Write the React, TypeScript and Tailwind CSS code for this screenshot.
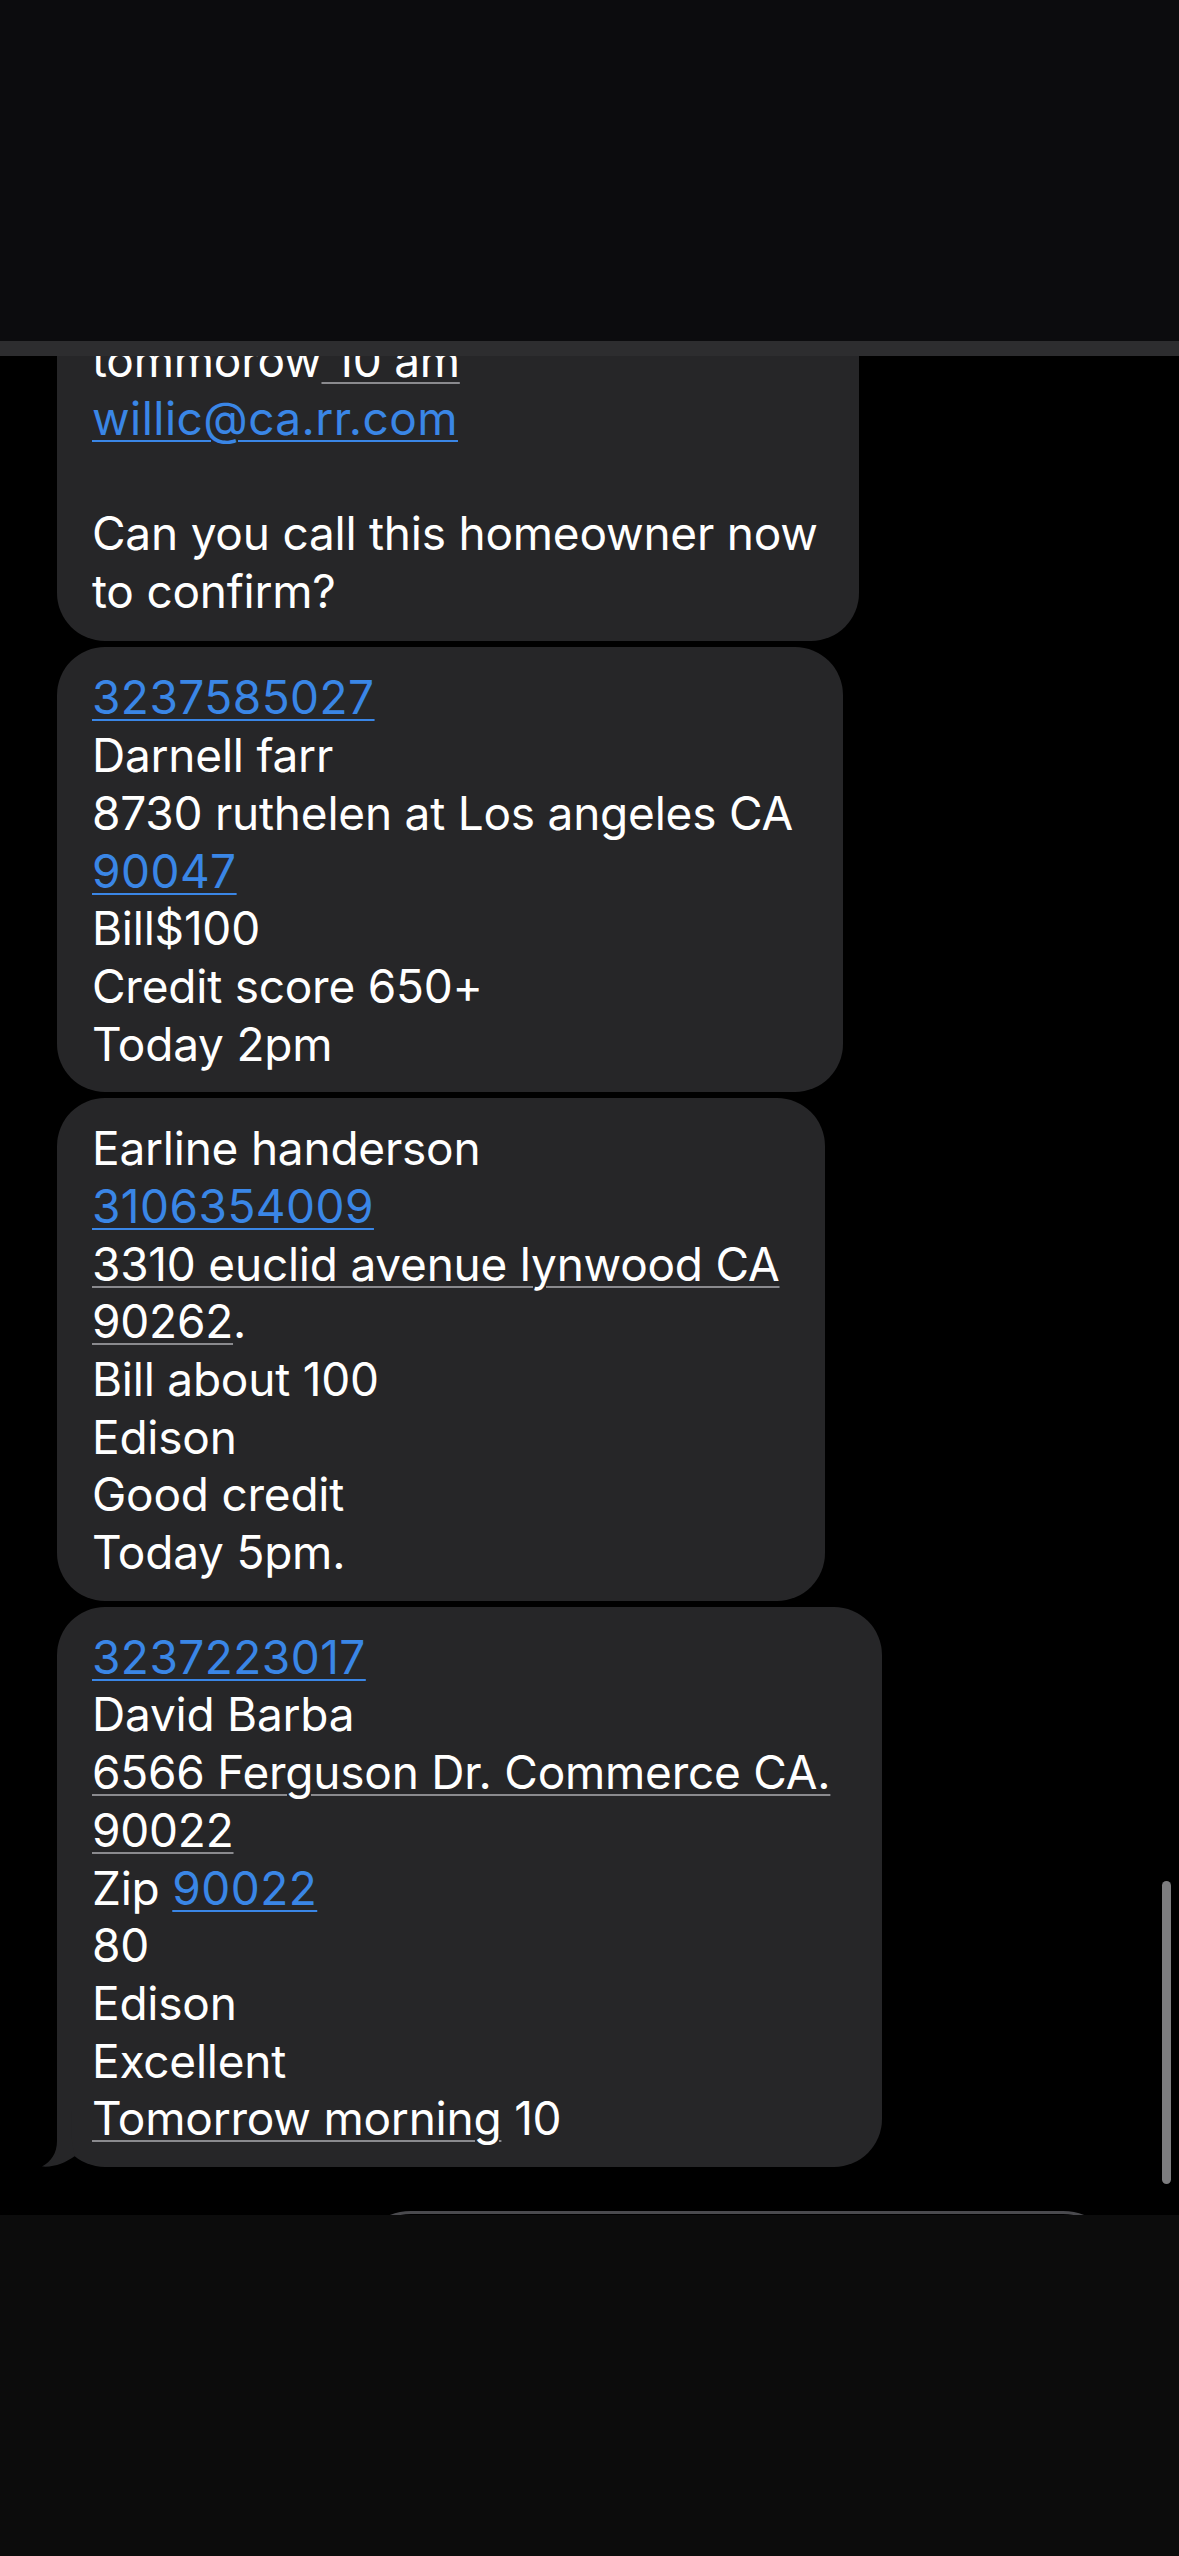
import type { ReactNode } from 'react';

const blue = 'text-[#3a86e6] underline decoration-[#3a86e6] decoration-2 underline-offset-[5px] tracking-[0.01em]';
const gray = 'underline decoration-[#8a8a8e] decoration-2 underline-offset-[5px]';

function Bubble({
  children,
  width,
  className = '',
  tail = false,
}: {
  children: ReactNode;
  width: string;
  className?: string;
  tail?: boolean;
}) {
  return (
    <div className={`relative rounded-[48px] bg-[#262628] pl-[35px] pr-[20px] pt-[22px] ${width} ${className}`}>
      {children}
      {tail && (
        <svg className="absolute -left-[15px] bottom-0" width="40" height="56" viewBox="0 0 40 56">
          <path d="M15,0 L15,30 C15,42 9,51 0,55.5 C12,56.5 23,52 33,45 C30,35 28,15 30,0 Z" fill="#262628" />
        </svg>
      )}
    </div>
  );
}

function Line({ children }: { children?: ReactNode }) {
  return <div className="h-[57.7px] whitespace-nowrap">{children}</div>;
}

export default function App() {
  return (
    <div
      className="flex h-[2556px] w-[1179px] flex-col overflow-hidden bg-black text-[46px] leading-[57.7px] tracking-[-0.005em] text-white"
      style={{ fontFamily: 'Inter, "Noto Sans", sans-serif' }}
    >
      {/* status / header area */}
      <div className="h-[341px] shrink-0 bg-[#0c0c0e]" />
      <div className="h-[15px] shrink-0 bg-[#2d2d2f]" />

      {/* conversation */}
      <div className="relative flex-1 overflow-hidden">
        <div className="flex flex-col gap-[6px] pl-[57px]">
          <Bubble width="w-[802px]" className="-mt-[46px] rounded-t-none pb-[21px]">
            <Line>
              tommorow<span className={gray}> 10 am</span>
            </Line>
            <Line>
              <span className={blue}>willic@ca.rr.com</span>
            </Line>
            <Line />
            <Line>Can you call this homeowner now</Line>
            <Line>to confirm?</Line>
          </Bubble>

          <Bubble width="w-[786px]" className="pb-[19px]">
            <Line>
              <span className={blue}>3237585027</span>
            </Line>
            <Line>Darnell farr</Line>
            <Line>8730 ruthelen at Los angeles CA</Line>
            <Line>
              <span className={blue}>90047</span>
            </Line>
            <Line>Bill$100</Line>
            <Line>Credit score 650+</Line>
            <Line>Today 2pm</Line>
          </Bubble>

          <Bubble width="w-[768px]" className="pb-[19px]">
            <Line>Earline handerson</Line>
            <Line>
              <span className={blue}>3106354009</span>
            </Line>
            <Line>
              <span className={gray}>3310 euclid avenue lynwood CA</span>
            </Line>
            <Line>
              <span className={gray}>90262</span>.
            </Line>
            <Line>Bill about 100</Line>
            <Line>Edison</Line>
            <Line>Good credit</Line>
            <Line>Today 5pm.</Line>
          </Bubble>

          <Bubble width="w-[825px]" className="pb-[19px]" tail>
            <Line>
              <span className={blue}>3237223017</span>
            </Line>
            <Line>David Barba</Line>
            <Line>
              <span className={gray}>6566 Ferguson Dr. Commerce CA.</span>
            </Line>
            <Line>
              <span className={gray}>90022</span>
            </Line>
            <Line>
              Zip <span className={blue}>90022</span>
            </Line>
            <Line>80</Line>
            <Line>Edison</Line>
            <Line>Excellent</Line>
            <Line>
              <span className={gray}>Tomorrow morning</span> 10
            </Line>
          </Bubble>
        </div>

        {/* message input, mostly hidden under the bottom bar */}
        <div className="ml-[356px] mt-[44px] h-[110px] w-[762px] rounded-[56px] border-[3px] border-[#4a4a4e]" />

        {/* scroll indicator */}
        <div className="absolute left-[1162px] top-[1525px] h-[303px] w-[9px] rounded-full bg-[#7d7d7f]" />
      </div>

      {/* keyboard / bottom area */}
      <div className="h-[341px] shrink-0 bg-[#0c0c0c]" />
    </div>
  );
}
